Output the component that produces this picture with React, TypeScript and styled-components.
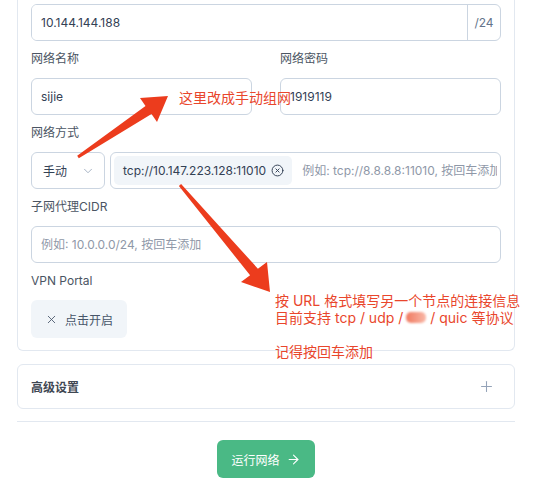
import { createGlobalStyle, styled } from "styled-components"
import { ChevronDown, CircleX, X, Plus, ArrowRight } from "lucide-react"

const GlobalStyle = createGlobalStyle`
  html, body { margin: 0; padding: 0; background: #fff; }
  body {
    font-family: Inter, "Noto Sans CJK SC", sans-serif;
    overflow: hidden;
  }
  * { box-sizing: border-box; }
`

const Page = styled.div`
  position: relative;
  width: 538px;
  height: 490px;
  padding: 0 23px 0 17px;
  overflow: hidden;
`

const Card = styled.section`
  display: flex;
  flex-direction: column;
  border: 1px solid #e2e8f0;
  border-top: none;
  border-radius: 0 0 6px 6px;
  padding: 4px 13px 12px;
`

const Field = styled.div`
  display: flex;
  flex-direction: column;
  margin-top: 9px;
  min-width: 0;
`

const Label = styled.label`
  font-size: 12px;
  line-height: 18px;
  color: #4b5563;
  margin-bottom: 10px;
`

const Columns = styled.div`
  display: grid;
  grid-template-columns: 1fr 1fr;
  column-gap: 28px;
`

const Input = styled.input`
  height: 37px;
  width: 100%;
  border: 1px solid #cbd5e1;
  border-radius: 6px;
  padding: 0 9px;
  font: inherit;
  font-size: 12px;
  color: #334155;
  background: #fff;
  outline: none;
  &::placeholder { color: #8f98a8; }
`

const Group = styled.div`
  display: flex;
  height: 37px;
  border: 1px solid #cbd5e1;
  border-radius: 6px;
  overflow: hidden;
`

const GroupInput = styled(Input)`
  flex: 1;
  height: 100%;
  border: none;
  border-radius: 0;
`

const Addon = styled.span`
  width: 33px;
  display: flex;
  align-items: center;
  justify-content: center;
  border-left: 1px solid #cbd5e1;
  font-size: 12px;
  color: #64748b;
`

const Row = styled.div`
  display: flex;
  gap: 5px;
`

const Select = styled.div`
  width: 74px;
  height: 37px;
  flex: none;
  display: flex;
  align-items: center;
  justify-content: space-between;
  padding: 0 9px 0 11px;
  border: 1px solid #cbd5e1;
  border-radius: 6px;
  font-size: 12px;
  color: #334155;
`

const TagBox = styled.div`
  flex: 1;
  min-width: 0;
  height: 37px;
  display: flex;
  align-items: center;
  gap: 10px;
  padding: 3px;
  border: 1px solid #cbd5e1;
  border-radius: 6px;
`

const Tag = styled.span`
  flex: none;
  height: 29px;
  display: flex;
  align-items: center;
  gap: 5px;
  padding: 0 8px 0 9px;
  background: #f1f5f9;
  border-radius: 5px;
  font-size: 12px;
  color: #334155;
  white-space: nowrap;
`

const TagInput = styled.input`
  flex: 1;
  min-width: 0;
  border: none;
  outline: none;
  padding: 0;
  font: inherit;
  font-size: 12px;
  background: transparent;
  &::placeholder { color: #8f98a8; }
`

const ToggleButton = styled.button`
  align-self: flex-start;
  height: 38px;
  display: inline-flex;
  align-items: center;
  gap: 7px;
  padding: 0 14px;
  border: none;
  border-radius: 6px;
  background: #f1f5f9;
  font: inherit;
  font-size: 12px;
  color: #475569;
`

const Panel = styled.div`
  margin-top: 13px;
  height: 45px;
  display: flex;
  align-items: center;
  justify-content: space-between;
  padding: 0 19px 0 13px;
  border: 1px solid #e2e8f0;
  border-radius: 6px;
  font-size: 12px;
  font-weight: 600;
  color: #3f4753;
`

const Divider = styled.hr`
  margin: 12px 0 0;
  border: none;
  height: 1px;
  background: #e2e8f0;
`

const Footer = styled.div`
  display: flex;
  justify-content: center;
  padding-top: 18px;
`

const RunButton = styled.button`
  height: 38px;
  display: inline-flex;
  align-items: center;
  gap: 6px;
  padding: 0 14px;
  border: none;
  border-radius: 6px;
  background: #4ab985;
  font: inherit;
  font-size: 12px;
  color: #fff;
`

const Overlay = styled.svg`
  position: absolute;
  inset: 0;
  pointer-events: none;
`

const Note = styled.div<{ $x: number; $y: number }>`
  position: absolute;
  left: ${(p) => p.$x}px;
  top: ${(p) => p.$y}px;
  display: flex;
  flex-direction: column;
  font-family: Inter, "Noto Sans CJK SC", sans-serif;
  font-size: 14px;
  line-height: 17px;
  color: #e9462c;
  white-space: nowrap;
`

const NoteLine = styled.div<{ $gap?: number }>`
  display: flex;
  align-items: center;
  margin-top: ${(p) => p.$gap ?? 0}px;
`

const Smudge = styled.span`
  display: inline-block;
  width: 20px;
  height: 11px;
  margin: 0 4px 0 3px;
  border-radius: 5px;
  background: linear-gradient(90deg, #f07a60, #f9b8a8);
  filter: blur(0.8px);
`

export default function App() {
  return (
    <Page>
      <GlobalStyle />
      <Card>
        <Group>
          <GroupInput readOnly value="10.144.144.188" />
          <Addon>/24</Addon>
        </Group>

        <Columns>
          <Field>
            <Label>网络名称</Label>
            <Input readOnly value="sijie" />
          </Field>
          <Field>
            <Label>网络密码</Label>
            <Input readOnly value="1919119" />
          </Field>
        </Columns>

        <Field>
          <Label>网络方式</Label>
          <Row>
            <Select>
              手动
              <ChevronDown size={14} color="#94a3b8" strokeWidth={1.4} />
            </Select>
            <TagBox>
              <Tag>
                tcp://10.147.223.128:11010
                <CircleX size={13} color="#334155" strokeWidth={1.8} />
              </Tag>
              <TagInput placeholder="例如: tcp://8.8.8.8:11010, 按回车添加" />
            </TagBox>
          </Row>
        </Field>

        <Field>
          <Label>子网代理CIDR</Label>
          <Input placeholder="例如: 10.0.0.0/24, 按回车添加" />
        </Field>

        <Field>
          <Label>VPN Portal</Label>
          <ToggleButton>
            <X size={13} strokeWidth={1.6} />
            点击开启
          </ToggleButton>
        </Field>
      </Card>

      <Panel>
        高级设置
        <Plus size={17} color="#94a3b8" strokeWidth={1.5} />
      </Panel>

      <Divider />

      <Footer>
        <RunButton>
          运行网络
          <ArrowRight size={15} strokeWidth={1.7} />
        </RunButton>
      </Footer>

      <Overlay width="538" height="490" viewBox="0 0 538 490">
        <polygon
          fill="#ec3c1d"
          points="77.2,155.8 145.5,106 140,98 168,96 157,122 151.5,113.9 78.8,158.2"
        />
        <polygon
          fill="#ec3c1d"
          points="181.1,184 257.9,268.7 267,262 270,292 241,282 250.1,275.3 178.9,186"
        />
      </Overlay>

      <Note $x={179} $y={89}>这里改成手动组网</Note>
      <Note $x={275} $y={292}>
        <NoteLine>按 URL 格式填写另一个节点的连接信息</NoteLine>
        <NoteLine>
          <span>目前支持 tcp / udp /</span>
          <Smudge />
          <span>/ quic 等协议</span>
        </NoteLine>
        <NoteLine $gap={17}>记得按回车添加</NoteLine>
      </Note>
    </Page>
  )
}
